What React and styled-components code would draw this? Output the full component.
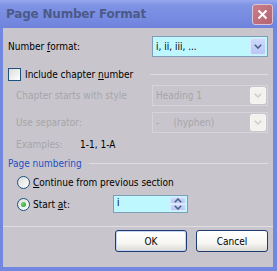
import styled, { createGlobalStyle } from "styled-components"

const Global = createGlobalStyle`
  html, body {
    margin: 0;
    padding: 0;
    background: #c8c6cc;
  }
  * { box-sizing: border-box; }
`

const Frame = styled.div`
  width: 277px;
  height: 271px;
  display: flex;
  flex-direction: column;
  background: #7287e0;
  font-family: "DejaVu Sans Condensed", "DejaVu Sans", sans-serif;
  font-size: 10px;
  color: #000;
`

const TitleBar = styled.div`
  height: 28px;
  display: flex;
  align-items: center;
  justify-content: space-between;
  padding: 0 4px 0 6px;
  background: linear-gradient(#97a8ee 0%, #7f93e4 20%, #7589e1 70%, #6f83dc 100%);
`

const Title = styled.div`
  font-family: "DejaVu Sans", sans-serif;
  font-weight: bold;
  font-size: 12px;
  color: #4d5a88;
  letter-spacing: -0.2px;
`

const CloseBox = styled.div`
  width: 21px;
  height: 21px;
  border-radius: 3px;
  border: 1px solid #dcc4d0;
  background: linear-gradient(135deg, #c87f8b, #b3636f);
  display: flex;
  align-items: center;
  justify-content: center;
`

const Body = styled.div`
  flex: 1;
  margin: 0 4px 4px 3px;
  background: #c8c6cc;
  padding: 8px 5px 0 5px;
  display: flex;
  flex-direction: column;
`

const Row = styled.div`
  display: flex;
  align-items: center;
  height: ${p => p.h || 13}px;
  margin-top: ${p => p.mt || 0}px;
  padding-left: ${p => p.indent || 0}px;
`

const Label = styled.span`
  color: ${p => (p.disabled ? "#a6a5aa" : "#000")};
  width: ${p => (p.w ? `${p.w}px` : "auto")};
  white-space: nowrap;
  flex-shrink: 0;
`

const GroupTitle = styled.span`
  color: #1f4fc6;
  white-space: nowrap;
`

const GroupLine = styled.div`
  height: 1px;
  background: #dedde2;
  flex: ${p => (p.w ? "none" : 1)};
  width: ${p => (p.w ? `${p.w}px` : "auto")};
  margin-left: ${p => (p.w ? "auto" : "7px")};
`

const Select = styled.div`
  margin-left: auto;
  width: 116px;
  height: 21px;
  border: 1px solid ${p => (p.disabled ? "#d5d4d9" : "#7f9db9")};
  background: ${p => (p.disabled ? "transparent" : "#bff7ff")};
  display: flex;
  align-items: center;
  padding: 1px;
`

const SelectText = styled.span`
  flex: 1;
  padding-left: 2px;
  color: ${p => (p.disabled ? "#a6a5aa" : "#000")};
  white-space: pre;
`

const DropButton = styled.div`
  width: 16px;
  height: 100%;
  border-radius: 2px;
  border: 1px solid ${p => (p.disabled ? "#f6f5f2" : "#dfe7fd")};
  background: ${p => (p.disabled ? "#f3f2ee" : "linear-gradient(#cdd9fb, #b7c8f5)")};
  display: flex;
  align-items: center;
  justify-content: center;
`

const CheckBox = styled.div`
  width: 13px;
  height: 13px;
  border: 1px solid #1c5180;
  background: linear-gradient(135deg, #dcdcd7, #ffffff);
  flex-shrink: 0;
  margin-right: 4px;
`

const Radio = styled.div`
  width: 13px;
  height: 13px;
  border-radius: 50%;
  border: 1px solid #1c5180;
  background: linear-gradient(135deg, #dcdcd7, #ffffff);
  flex-shrink: 0;
  margin-right: 3px;
  display: flex;
  align-items: center;
  justify-content: center;
  &::after {
    content: "";
    display: ${p => (p.checked ? "block" : "none")};
    width: 5px;
    height: 5px;
    border-radius: 50%;
    background: radial-gradient(circle at 35% 35%, #6fd56f, #1f9a1f);
  }
`

const SpinBox = styled.div`
  margin-left: auto;
  margin-right: 80px;
  width: 75px;
  height: 18px;
  border: 1px solid #7f9db9;
  background: #bff7ff;
  display: flex;
  align-items: stretch;
  padding: 1px;
`

const SpinButtons = styled.div`
  width: 16px;
  display: flex;
  flex-direction: column;
  gap: 0;
`

const SpinHalf = styled.div`
  flex: 1;
  border-radius: 2px;
  border: 1px solid #dfe7fd;
  background: linear-gradient(#cdd9fb, #b7c8f5);
  display: flex;
  align-items: center;
  justify-content: center;
`

const Separator = styled.div`
  height: 1px;
  background: #dedde2;
  margin: 13px -5px 0 -5px;
`

const ButtonRow = styled.div`
  display: flex;
  justify-content: flex-end;
  gap: 9px;
  margin-top: 3px;
`

const Button = styled.div`
  width: 72px;
  height: 22px;
  border: 1px solid #1d3b6e;
  border-radius: 3px;
  background: linear-gradient(#ffffff 0%, #f6f6f3 60%, #dcdad4 100%);
  box-shadow: ${p => (p.primary ? "inset 0 0 0 1px #c5d4f4" : "none")};
  display: flex;
  align-items: center;
  justify-content: center;
`

function Chevron({ color, up }) {
  return (
    <svg width="8" height="5" viewBox="0 0 8 5" style={{ transform: up ? "rotate(180deg)" : "none" }}>
      <path d="M0.8 0.8 L4 4 L7.2 0.8" fill="none" stroke={color} strokeWidth="1.6" />
    </svg>
  )
}

export default function App() {
  return (
    <Frame>
      <Global />
      <TitleBar>
        <Title>Page Number Format</Title>
        <CloseBox>
          <svg width="11" height="11" viewBox="0 0 11 11">
            <path d="M1.5 1.5 L9.5 9.5 M9.5 1.5 L1.5 9.5" stroke="#fff" strokeWidth="2" />
          </svg>
        </CloseBox>
      </TitleBar>
      <Body>
        <Row h={21}>
          <Label>Number <u>f</u>ormat:</Label>
          <Select>
            <SelectText>i, ii, iii, ...</SelectText>
            <DropButton><Chevron color="#4d6185" /></DropButton>
          </Select>
        </Row>
        <Row mt={11}>
          <CheckBox />
          <Label>Include chapter <u>n</u>umber</Label>
          <GroupLine w={118} />
        </Row>
        <Row h={21} mt={4} indent={8}>
          <Label disabled>Chapter starts with style</Label>
          <Select disabled>
            <SelectText disabled>Heading 1</SelectText>
            <DropButton disabled><Chevron color="#cfcec9" /></DropButton>
          </Select>
        </Row>
        <Row h={21} mt={6} indent={8}>
          <Label disabled>Use separator:</Label>
          <Select disabled>
            <SelectText disabled>{"-     (hyphen)"}</SelectText>
            <DropButton disabled><Chevron color="#cfcec9" /></DropButton>
          </Select>
        </Row>
        <Row mt={5} indent={8}>
          <Label disabled w={64}>Examples:</Label>
          <Label>1-1, 1-A</Label>
        </Row>
        <Row mt={6}>
          <GroupTitle>Page numbering</GroupTitle>
          <GroupLine />
        </Row>
        <Row mt={6} indent={9}>
          <Radio />
          <Label><u>C</u>ontinue from previous section</Label>
        </Row>
        <Row h={18} mt={6} indent={9}>
          <Radio checked />
          <Label>Start <u>a</u>t:</Label>
          <SpinBox>
            <SelectText>i</SelectText>
            <SpinButtons>
              <SpinHalf><Chevron color="#4d6185" up /></SpinHalf>
              <SpinHalf><Chevron color="#4d6185" /></SpinHalf>
            </SpinButtons>
          </SpinBox>
        </Row>
        <Separator />
        <ButtonRow>
          <Button primary>OK</Button>
          <Button>Cancel</Button>
        </ButtonRow>
      </Body>
    </Frame>
  )
}
